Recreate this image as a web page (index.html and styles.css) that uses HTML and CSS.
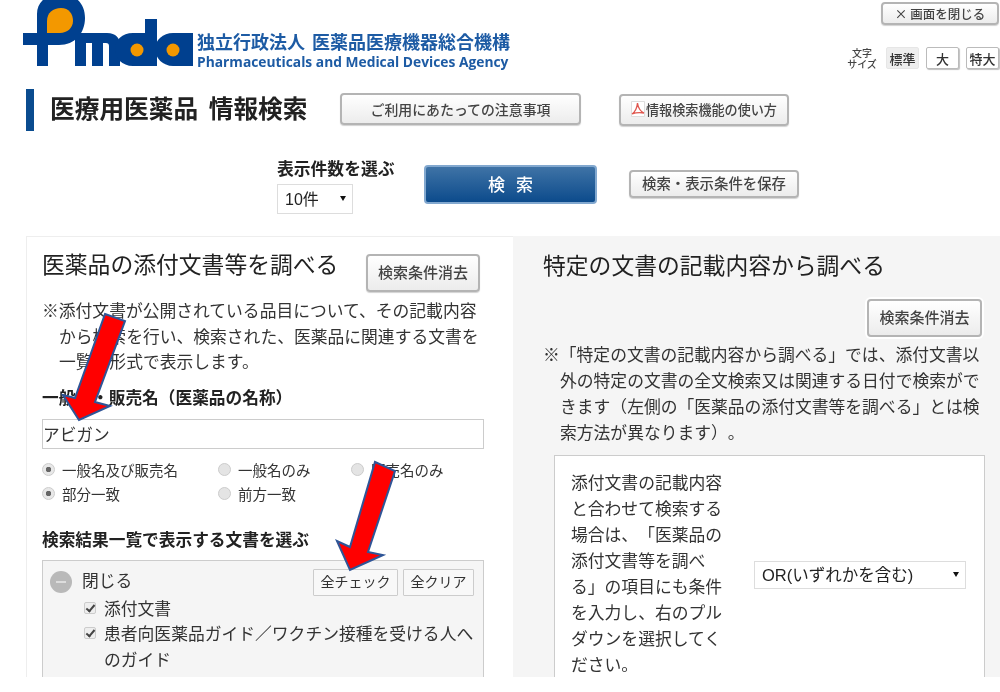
FILE: index.html
```html
<!DOCTYPE html>
<html lang="ja">
<head>
<meta charset="utf-8">
<title>医療用医薬品 情報検索</title>
<link rel="stylesheet" href="styles.css">
</head>
<body>
<div class="page">
  <header class="top">
    <div class="brand">
      <svg class="logo" viewBox="0 0 175 68" width="175" height="68" aria-label="Pmda">
        <g fill="#00408f">
          <path d="M0 33H14V14C14 3 22 -6 38 -6C54 -6 62 5 62 18C62 33 52 45 36 45H25V66H14V45H0Z"/>
          <path d="M52 33H84C93 33 97 38 97 45V66H86V46C86 44 85 43 83 43H80V66H69V43H63V66H52Z"/>
          <path d="M110 33H122V19H134V66H110C99 66 92 58 92 49C92 40 99 33 110 33Z"/>
          <path d="M150 33H170V66H150C140 66 132 58 132 49C132 40 140 33 150 33Z"/>
        </g>
        <path fill="#f39800" d="M24 33V21C24 13 30 8 38 8C46 8 50 14 50 21C50 28 44 33 37 33Z"/>
        <circle cx="114" cy="50" r="6.5" fill="#f39800"/>
        <circle cx="150" cy="50" r="6.5" fill="#f39800"/>
      </svg>
      <div class="org">
        <div class="org-ja">独立行政法人 医薬品医療機器総合機構</div>
        <div class="org-en">Pharmaceuticals and Medical Devices Agency</div>
      </div>
    </div>
    <div class="tools">
      <button class="btn close-btn">× 画面を閉じる</button>
      <div class="sizes">
        <div class="size-label">文字<br>サイズ</div>
        <button class="size size-on">標準</button>
        <button class="size">大</button>
        <button class="size">特大</button>
      </div>
    </div>
  </header>

  <div class="titlebar">
    <h1 class="title">医療用医薬品 情報検索</h1>
    <button class="btn notice-btn">ご利用にあたっての注意事項</button>
    <button class="btn pdf-btn">
      <svg class="pdf-icon" viewBox="0 0 14 16" width="14" height="16"><path fill="#fff" stroke="#ddd" d="M.5.5H13.5V15.5H.5Z"/><path fill="none" stroke="#e0574f" stroke-width="1.3" d="M1 13C4 11 6 7 6.5 2C7 7 10 11 13 12C10 11.5 5 11.5 1 13Z"/></svg>
      情報検索機能の使い方
    </button>
  </div>

  <div class="searchbar">
    <div class="count">
      <div class="count-label">表示件数を選ぶ</div>
      <div class="select-wrap count-select"><select class="select"><option>10件</option></select></div>
    </div>
    <button class="search-btn">検 索</button>
    <button class="btn save-btn">検索・表示条件を保存</button>
  </div>

  <main class="panels">
    <section class="panel panel-left">
      <div class="panel-head">
        <h2 class="panel-title">医薬品の添付文書等を調べる</h2>
        <button class="btn clear-btn">検索条件消去</button>
      </div>
      <p class="note">※添付文書が公開されている品目について、その記載内容<br>から検索を行い、検索された、医薬品に関連する文書を<br>一覧の形式で表示します。</p>
      <h3 class="label name-label">一般名・販売名（医薬品の名称）</h3>
      <input class="text-input" type="text" value="アビガン">
      <div class="radios">
        <label class="radio"><input type="radio" name="a" checked>一般名及び販売名</label>
        <label class="radio"><input type="radio" name="a">一般名のみ</label>
        <label class="radio"><input type="radio" name="a">販売名のみ</label>
        <label class="radio"><input type="radio" name="b" checked>部分一致</label>
        <label class="radio"><input type="radio" name="b">前方一致</label>
      </div>
      <h3 class="label doc-label">検索結果一覧で表示する文書を選ぶ</h3>
      <div class="doc-box">
        <div class="doc-head">
          <span class="minus"></span>
          <span class="doc-toggle">閉じる</span>
          <button class="mini mini-first">全チェック</button>
          <button class="mini">全クリア</button>
        </div>
        <label class="check"><input type="checkbox" checked><span>添付文書</span></label>
        <label class="check"><input type="checkbox" checked><span>患者向医薬品ガイド／ワクチン接種を受ける人へ<br>のガイド</span></label>
      </div>
    </section>

    <section class="panel panel-right">
      <h2 class="panel-title">特定の文書の記載内容から調べる</h2>
      <div class="right-action"><button class="btn clear-btn">検索条件消去</button></div>
      <p class="note right-note">※「特定の文書の記載内容から調べる」では、添付文書以<br>外の特定の文書の全文検索又は関連する日付で検索がで<br>きます（左側の「医薬品の添付文書等を調べる」とは検<br>索方法が異なります）。</p>
      <div class="cond-box">
        <p class="cond-text">添付文書の記載内容<br>と合わせて検索する<br>場合は、「医薬品の<br>添付文書等を調べ<br>る」の項目にも条件<br>を入力し、右のプル<br>ダウンを選択してく<br>ださい。</p>
        <div class="select-wrap or-select"><select class="select"><option>OR(いずれかを含む)</option></select></div>
      </div>
    </section>
  </main>

  <svg class="arrows" viewBox="0 0 1000 692" width="1000" height="692" aria-hidden="true">
    <path d="M105 314L125 321L95 402L110 406L79 420L63 395L75 398Z"/>
    <path d="M375 462L395 471L368 552L383 555L350 570L337 541L350 547Z"/>
  </svg>
</div>
</body>
</html>
```
FILE: styles.css
```css
* { box-sizing: border-box; }
html, body { margin: 0; padding: 0; background: #fff; }
body {
  font-family: "Noto Sans CJK JP", "Liberation Sans", sans-serif;
  color: #333;
  text-spacing-trim: space-all;
}
button, input, select { font-family: inherit; color: inherit; margin: 0; text-spacing-trim: space-all; }
h1, h2, h3, p { margin: 0; }

.page {
  position: relative;
  height: 677px;
  overflow: hidden;
  filter: blur(0.35px);
}

/* header */
.top { display: flex; justify-content: space-between; height: 89px; }
.brand { display: flex; align-items: flex-start; padding-left: 23px; }
.logo { display: block; overflow: visible; }
.org { margin-left: -1px; padding-top: 30px; color: #1d5ba4; }
.org-ja { font-size: 18px; font-weight: 700; line-height: 22px; white-space: nowrap; word-spacing: 3px; }
.org-en { font-family: "Open Sans", sans-serif; font-size: 13.8px; font-weight: 700; line-height: 19px; white-space: nowrap; }

.tools { display: flex; flex-direction: column; align-items: flex-end; padding: 2px 1px 0 0; }
.btn {
  border: 2px solid #b4b4b4;
  border-radius: 4px;
  background: linear-gradient(#fff, #ececec);
  box-shadow: 0 1px 1px rgba(0,0,0,.18);
  color: #444;
  padding: 0;
  white-space: nowrap;
  font-weight: 500;
}
.close-btn { width: 118px; height: 23px; padding-bottom: 2px; font-size: 12.5px; }
.sizes { display: flex; align-items: center; gap: 7px; margin-top: 22px; }
.size-label { width: 30px; margin-right: 2px; font-size: 10px; line-height: 11px; text-align: center; font-weight: 500; color: #444; white-space: nowrap; }
.size {
  width: 33px; height: 22px; padding: 0;
  border: 1px solid #bbb; border-radius: 2px;
  background: #fff;
  box-shadow: 1px 1px 1px rgba(0,0,0,.25);
  font-size: 13px; font-weight: 500;
}
.size-on { background: #eee; border-color: #e6e6e6; box-shadow: none; }

/* title */
.titlebar { display: flex; align-items: center; height: 42px; margin-left: 26px; border-left: 8px solid #0a4c8f; padding-left: 16px; }
.title { width: 290px; margin-top: -6px; font-size: 24.7px; font-weight: 700; line-height: 32px; word-spacing: 5px; color: #222; white-space: nowrap; }
.notice-btn { width: 241px; height: 32px; margin-top: -2px; font-size: 13.9px; }
.pdf-btn { display: flex; align-items: center; justify-content: center; width: 170px; height: 32px; margin-left: 38px; padding-bottom: 2px; font-size: 13.1px; }
.pdf-icon { margin-right: 1px; }

/* search */
.searchbar { display: flex; align-items: flex-start; height: 105px; padding: 27px 0 0 277px; }
.count { width: 147px; }
.count-label { font-size: 16.8px; font-weight: 700; line-height: 22px; color: #222; margin-top: -1px; white-space: nowrap; }
.select-wrap { position: relative; display: block; }
.select-wrap::after {
  content: "";
  position: absolute;
  top: 50%;
  right: 7px;
  margin-top: -3px;
  border-top: 5px solid #111;
  border-left: 3px solid transparent;
  border-right: 3px solid transparent;
}
.select {
  display: block; width: 100%; height: 100%;
  appearance: none;
  border: 1px solid #ddd;
  border-radius: 0;
  background: #fff;
  font-family: "Liberation Sans", "Noto Sans CJK JP", sans-serif;
  font-size: 16px;
  padding: 0 0 0 7px;
  color: #222;
}
.count-select { width: 76px; height: 30px; margin-top: 5px; }
.search-btn {
  width: 173px; height: 39px; padding: 0 0 3px;
  border: 2px solid #82a8cf;
  border-radius: 4px;
  background: linear-gradient(#3f73a6, #0c4b8c);
  color: #fff;
  font-size: 17px;
  font-weight: 500;
  word-spacing: 7px;
  margin-top: 7px;
}
.save-btn { width: 170px; height: 28px; margin: 12px 0 0 32px; padding-bottom: 3px; font-size: 14.4px; }

/* panels */
.panels { display: grid; grid-template-columns: 487px 487px; margin-left: 26px; height: 441px; }
.panel { font-size: 16.8px; line-height: 25.5px; }
.panel-left { background: #fff; border-left: 1px solid #eee; border-top: 1px solid #eee; padding: 0 0 0 15px; }
.panel-right { background: #f5f5f5; padding: 0 0 0 30px; }
.panel-head { display: flex; justify-content: space-between; width: 438px; padding-top: 17px; height: 56px; }
.panel-title { font-size: 22.8px; font-weight: 400; line-height: 26px; margin-top: -3px; color: #222; white-space: nowrap; }
.panel-right .panel-title { margin-top: 0; padding-top: 16px; }
.clear-btn { width: 115px; height: 38px; padding-bottom: 4px; font-size: 15px; }
.panel-head .clear-btn { width: 114px; }
.note { padding-left: 17px; text-indent: -17px; white-space: nowrap; margin-top: 5px; }
.label { font-size: 16.7px; font-weight: 700; line-height: 24px; color: #222; white-space: nowrap; }
.name-label { margin-top: 10px; }
.text-input {
  display: block; width: 442px; height: 30px; margin-top: 10px;
  border: 1px solid #ccc; border-radius: 0;
  padding: 0; font-size: 16.7px; background: #fff; color: #333;
}
.radios { display: grid; grid-template-columns: 176px 133px 1fr; margin-top: 9px; font-size: 14.5px; line-height: 24px; }
.radio { display: flex; align-items: center; white-space: nowrap; }
.radio input {
  appearance: none;
  width: 13px; height: 13px; margin: 0 7px 0 0;
  border-radius: 50%;
  border: 1px solid #ccc;
  background: #e4e4e4;
}
.radio input:checked { background: radial-gradient(circle, #666 0 2.5px, #e8e8e8 3px); }
.doc-label { margin-top: 21px; }
.doc-box {
  width: 442px; height: 200px; margin-top: 9px;
  border: 1px solid #ccc;
  background: #f5f5f5;
  padding: 8px 9px 0 7px;
}
.doc-head { display: flex; align-items: center; height: 27px; }
.minus {
  position: relative; width: 22px; height: 22px; border-radius: 50%;
  background: #b9b9b9; margin-top: 0;
}
.minus::after { content: ""; position: absolute; left: 6px; right: 6px; top: 10px; height: 2px; background: #ddd; }
.doc-toggle { margin: -3px 0 0 10px; flex: 1; }
.mini {
  width: 71px; height: 27px; padding: 0 0 2px;
  border: 1px solid #ccc; border-radius: 1px;
  background: #f8f8f8;
  font-size: 14px;
  margin-left: 5px;
}
.mini-first { width: 85px; }
.check { display: flex; align-items: flex-start; padding-left: 34px; white-space: nowrap; }
.check input {
  appearance: none;
  position: relative;
  flex: none;
  width: 12px; height: 12px;
  margin: 6px 8px 0 0;
  border: 1px solid #ccc;
  border-radius: 2px;
  background: #eee;
}
.check input:checked::after {
  content: "";
  position: absolute;
  left: 3px; top: 0;
  width: 3px; height: 7px;
  border: solid #444;
  border-width: 0 2px 2px 0;
  transform: rotate(40deg);
}
.right-action { display: flex; justify-content: flex-end; width: 439px; margin-top: 21px; }
.right-action .clear-btn { box-shadow: 0 0 0 2px #fff; }
.right-note { margin-top: 4px; line-height: 26px; }
.cond-box {
  display: flex; align-items: center;
  width: 431px; margin: 10px 0 0 11px;
  border: 1px solid #ccc;
  background: #fff;
  padding: 13px 18px 20px 16px;
}
.cond-text { width: 183px; flex: none; white-space: nowrap; line-height: 26px; }
.or-select { width: 212px; height: 28px; margin-top: 4px; }
.or-select .select { font-size: 16.5px; padding-left: 7px; }

.arrows { position: absolute; left: 0; top: 0; pointer-events: none; }
.arrows path { fill: #f00; stroke: #2f5597; stroke-width: 2; stroke-linejoin: miter; }
```
